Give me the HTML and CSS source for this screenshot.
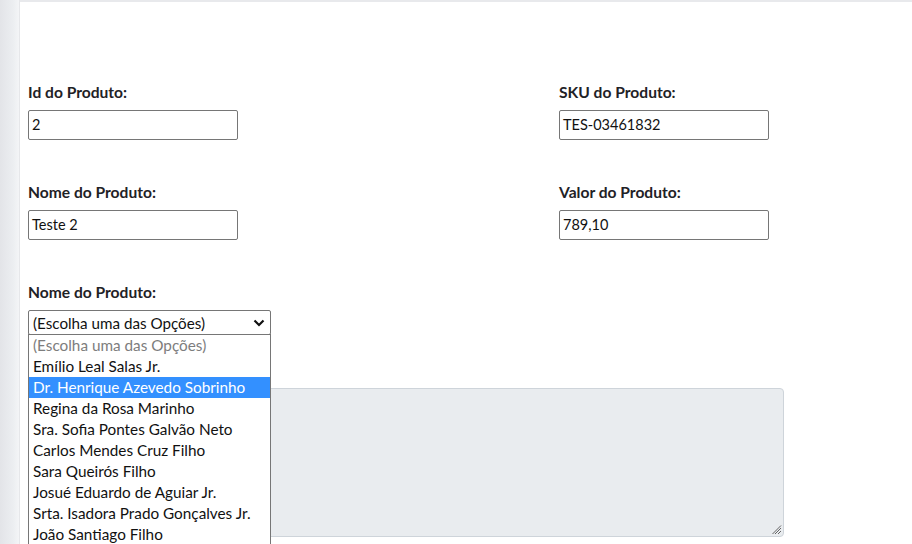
FILE: index.html
```html
<!DOCTYPE html>
<html lang="pt-BR">
<head>
<meta charset="utf-8">
<title>Produto</title>
<link rel="stylesheet" href="styles.css">
</head>
<body>
<div class="layout">
  <aside class="sidebar"></aside>
  <main class="main">
    <form class="form">
      <div class="grid">
        <div class="field">
          <label class="label">Id do Produto:</label>
          <div class="input">2</div>
        </div>
        <div class="field">
          <label class="label">SKU do Produto:</label>
          <div class="input">TES-03461832</div>
        </div>
        <div class="field">
          <label class="label">Nome do Produto:</label>
          <div class="input">Teste 2</div>
        </div>
        <div class="field">
          <label class="label">Valor do Produto:</label>
          <div class="input">789,10</div>
        </div>
        <div class="field">
          <label class="label">Nome do Produto:</label>
          <div class="select-wrap">
            <div class="select">
              <span>(Escolha uma das Opções)</span>
              <svg class="chev" width="12" height="8" viewBox="0 0 12 8"><path d="M1.5 1.5 L6 6 L10.5 1.5" fill="none" stroke="#111" stroke-width="2.2"/></svg>
            </div>
            <ul class="options">
              <li class="opt disabled">(Escolha uma das Opções)</li>
              <li class="opt">Emílio Leal Salas Jr.</li>
              <li class="opt active">Dr. Henrique Azevedo Sobrinho</li>
              <li class="opt">Regina da Rosa Marinho</li>
              <li class="opt">Sra. Sofia Pontes Galvão Neto</li>
              <li class="opt">Carlos Mendes Cruz Filho</li>
              <li class="opt">Sara Queirós Filho</li>
              <li class="opt">Josué Eduardo de Aguiar Jr.</li>
              <li class="opt">Srta. Isadora Prado Gonçalves Jr.</li>
              <li class="opt">João Santiago Filho</li>
            </ul>
          </div>
        </div>
      </div>
      <div class="textarea-row">
        <div class="textarea">
          <svg class="grip" width="10" height="10" viewBox="0 0 10 10"><path d="M9 3 L3 9 M9 6 L6 9 M9 0.5 L0.5 9" stroke="#555" stroke-width="0.9"/></svg>
        </div>
      </div>
    </form>
  </main>
</div>
</body>
</html>
```

FILE: styles.css
```css
* { box-sizing: border-box; }
html, body { margin: 0; padding: 0; background: #fff; }
body {
  font-family: "Lato", "Noto Sans", sans-serif;
  color: #212529;
  width: 912px;
  height: 544px;
  overflow: hidden;
}
.layout { display: flex; height: 544px; }
.sidebar {
  width: 20px;
  flex: none;
  background: linear-gradient(to right, #e3e4e8 0%, #eceef1 70%, #f4f5f7 100%);
  border-right: 1px solid #e6e7ea;
}
.main {
  flex: 1;
  border-top: 2px solid #e8e9ec;
  padding: 81px 0 0 8px;
}
.grid {
  display: grid;
  grid-template-columns: 531px 1fr;
  row-gap: 43px;
}
.field { display: flex; flex-direction: column; gap: 9px; }
.label {
  font-weight: 700;
  font-size: 15.6px;
  line-height: 18px;
  color: #1f2226;
}
.input {
  width: 210px;
  height: 30px;
  border: 1px solid #767676;
  border-radius: 2px;
  font-size: 14.5px;
  line-height: 28px;
  padding-left: 3px;
  color: #111;
}
.select-wrap { position: relative; width: 243px; }
.select {
  height: 25px;
  border: 1px solid #767676;
  border-radius: 2px;
  display: flex;
  align-items: center;
  justify-content: space-between;
  padding: 0 5px 0 4px;
  font-size: 15.2px;
  color: #111;
}
.chev { display: block; }
.options {
  position: absolute;
  left: 0;
  top: 24px;
  width: 243px;
  margin: 0;
  padding: 0;
  list-style: none;
  background: #fff;
  border: 1px solid #767676;
  z-index: 2;
}
.opt {
  height: 21px;
  line-height: 21px;
  font-size: 15.3px;
  padding-left: 4px;
  color: #111;
  white-space: nowrap;
}
.opt.disabled { color: #7d7d7d; }
.opt.active { background: #3390ff; color: #fff; }
.textarea-row { padding-top: 53px; }
.textarea {
  position: relative;
  width: 756px;
  height: 149px;
  background: #e9ecef;
  border: 1px solid #ced4da;
  border-radius: 4px;
}
.grip { position: absolute; right: 1px; bottom: 1px; }
```
